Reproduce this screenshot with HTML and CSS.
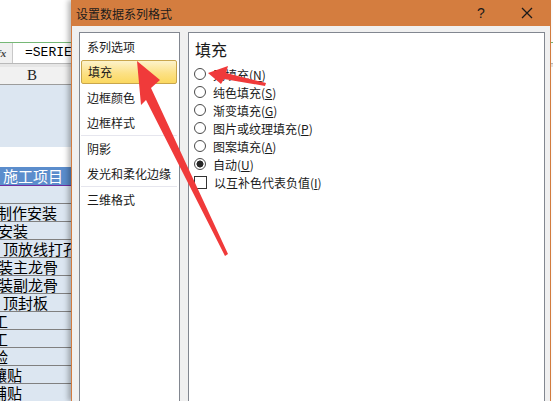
FILE: index.html
```html
<!DOCTYPE html>
<html lang="zh-CN">
<head>
<meta charset="utf-8">
<title>设置数据系列格式</title>
<link rel="stylesheet" href="styles.css">
</head>
<body>
<div class="sheet">
  <div class="top"></div>
  <div class="formula">
    <div class="fx"><span>fx</span></div>
    <div class="ftext">=SERIE</div>
  </div>
  <div class="gap"></div>
  <div class="colhead"><span class="colname">B</span></div>
  <div class="blue"></div>
  <div class="white"></div>
  <div class="hdr"><span class="in3">施工项目</span></div>
  <div class="row"></div>
  <div class="row"><span class="inm3">制作安装</span></div>
  <div class="row"><span class="inm2">安装</span></div>
  <div class="row"><span class="in3">顶放线打孔</span></div>
  <div class="row"><span class="inm2">装主龙骨</span></div>
  <div class="row"><span class="inm2">装副龙骨</span></div>
  <div class="row"><span class="in3">顶封板</span></div>
  <div class="row"><span class="inm7">工</span></div>
  <div class="row"><span class="inm7">工</span></div>
  <div class="row"><span class="inm7">验</span></div>
  <div class="row"><span class="inm8">镶贴</span></div>
  <div class="row"><span class="inm8">铺贴</span></div>
</div>

<div class="dialog">
  <div class="titlebar">
    <div class="title">设置数据系列格式</div>
    <div class="tbtn help">?</div>
    <div class="tbtn close">
      <svg width="12" height="12" viewBox="0 0 12 12"><path d="M1 1L11 11M11 1L1 11" stroke="#1a1a1a" stroke-width="1.3" fill="none"/></svg>
    </div>
  </div>
  <div class="body">
    <div class="list">
      <div class="item">系列选项</div>
      <div class="item selected">填充</div>
      <div class="item">边框颜色</div>
      <div class="item">边框样式</div>
      <div class="sep"></div>
      <div class="item">阴影</div>
      <div class="item">发光和柔化边缘</div>
      <div class="sep"></div>
      <div class="item">三维格式</div>
    </div>
    <div class="panel">
      <div class="heading">填充</div>
      <div class="options">
        <div class="opt"><span class="radio"></span><span class="label">无填充(<u>N</u>)</span></div>
        <div class="opt"><span class="radio"></span><span class="label">纯色填充(<u>S</u>)</span></div>
        <div class="opt"><span class="radio"></span><span class="label">渐变填充(<u>G</u>)</span></div>
        <div class="opt"><span class="radio"></span><span class="label">图片或纹理填充(<u>P</u>)</span></div>
        <div class="opt"><span class="radio"></span><span class="label">图案填充(<u>A</u>)</span></div>
        <div class="opt"><span class="radio on"></span><span class="label">自动(<u>U</u>)</span></div>
        <div class="opt"><span class="check"></span><span class="label">以互补色代表负值(<u>I</u>)</span></div>
      </div>
    </div>
  </div>
</div>

<svg class="arrows" width="553" height="401" viewBox="0 0 553 401">
  <polygon points="137,61 160,80 151,88 228,254 225,256 146,100 141,105" fill="#f03a3a"/>
  <polygon points="208,73 228,66 226,73 266,83 265,86 224,79 221,84" fill="#f03a3a"/>
</svg>
</body>
</html>
```
FILE: styles.css
```css
body {
  margin: 0;
  width: 553px;
  height: 401px;
  overflow: hidden;
  position: relative;
  background: #ececec;
  font-family: "Noto Sans CJK SC", sans-serif;
}

.sheet {
  width: 553px;
  background: #fff;
  height: 401px;
  overflow: hidden;
}

.top {
  height: 42px;
  background: #fff;
}

.formula {
  height: 20px;
  border-top: 1px solid #76b876;
  border-bottom: 1px solid #b9b9b9;
  display: flex;
  background: #fff;
}

.fx {
  width: 12px;
  background: #f0f0f0;
  border-right: 1px solid #c8c8c8;
  overflow: hidden;
  display: flex;
  align-items: center;
}

.fx span {
  margin-left: -3px;
  font-family: "Liberation Serif", serif;
  font-style: italic;
  font-weight: bold;
  font-size: 11px;
  color: #444;
}

.ftext {
  padding-left: 12px;
  font-family: "Liberation Mono", monospace;
  font-size: 13px;
  line-height: 20px;
  color: #000;
}

.gap {
  height: 3px;
  background: #e6e6e6;
}

.colhead {
  height: 17px;
  width: 64px;
  padding-right: 16px;
  background: #f1f1f1;
  border-bottom: 1px solid #9c9c9c;
  display: flex;
  justify-content: center;
}

.colname {
  font-family: "Liberation Serif", serif;
  font-size: 15px;
  line-height: 17px;
  color: #222;
}

.blue {
  height: 62px;
  width: 80px;
  background: #dce6f1;
}

.white {
  height: 20px;
}

.hdr {
  height: 18px;
  width: 80px;
  background: #5b8dcc;
  color: #fff;
  border-bottom: 1px solid #7030a0;
  font-size: 15px;
  line-height: 18px;
  white-space: nowrap;
  overflow: hidden;
}

.row {
  height: 17px;
  width: 80px;
  background: #dce6f1;
  border-bottom: 1px solid #808080;
  font-size: 15px;
  line-height: 17px;
  color: #000;
  white-space: nowrap;
  overflow: hidden;
}

.row span, .hdr span { display: inline-block; }
.in3 { margin-left: 3px; }
.inm2 { margin-left: -2px; }
.inm3 { margin-left: -3px; }
.inm7 { margin-left: -7px; }
.inm8 { margin-left: -8px; }

/* dialog */
.dialog {
  position: absolute;
  left: 71px;
  top: 0;
  width: 478px;
  height: 401px;
  border-left: 1px solid #d27b3e;
  border-right: 1px solid #d27b3e;
  background: #f0f0f0;
  box-shadow: -3px 0 5px rgba(0, 0, 0, 0.28);
  display: flex;
  flex-direction: column;
  overflow: hidden;
}

.titlebar {
  height: 26px;
  flex: none;
  background: #d47d3f;
  display: flex;
  align-items: center;
  padding-left: 4px;
  font-size: 12px;
  color: #1b1b1b;
}

.title { flex: 1; }

.tbtn {
  width: 46px;
  height: 26px;
  display: flex;
  align-items: center;
  justify-content: center;
}

.help {
  font-family: "Liberation Sans", sans-serif;
  font-size: 14px;
  color: #1a1a1a;
}

.body {
  flex: 1;
  display: flex;
  gap: 8px;
  padding: 6px 5px 0 7px;
}

.list {
  width: 99px;
  border: 1px solid #828790;
  border-bottom: 0;
  background: #fff;
  padding-top: 1px;
  font-size: 12px;
  color: #1a1a1a;
}

.item {
  height: 25px;
  line-height: 25px;
  padding-left: 7px;
  white-space: nowrap;
}

.item.selected {
  height: 22px;
  line-height: 22px;
  margin: 1px 2px 1px 1px;
  padding-left: 6px;
  border: 1px solid #c9a64c;
  border-radius: 2px;
  background: linear-gradient(#fdf3cb, #fce186 55%, #fbd85f);
}

.sep {
  height: 1px;
  margin: 0 2px 0 1px;
  background: #e6e6ee;
}

.panel {
  flex: 1;
  border: 1px solid #828790;
  border-bottom: 0;
  background: #fff;
}

.heading {
  padding: 5px 0 0 6px;
  font-size: 16px;
  line-height: 22px;
  color: #1a1a1a;
}

.options {
  margin-top: 5px;
  display: flex;
  flex-direction: column;
}

.opt {
  height: 18px;
  display: flex;
  align-items: center;
  padding-left: 5px;
  gap: 7px;
  font-size: 12px;
  color: #1a1a1a;
}

.radio {
  width: 10px;
  height: 10px;
  border: 1px solid #4a4a4a;
  border-radius: 50%;
  background: #fff;
}

.radio.on {
  background: radial-gradient(circle, #262626 0 3.2px, #fff 3.8px);
}

.check {
  width: 11px;
  height: 11px;
  border: 1px solid #333;
  background: #fff;
}

.label u {
  text-underline-offset: 1px;
}

.arrows {
  position: absolute;
  left: 0;
  top: 0;
  pointer-events: none;
}
```
